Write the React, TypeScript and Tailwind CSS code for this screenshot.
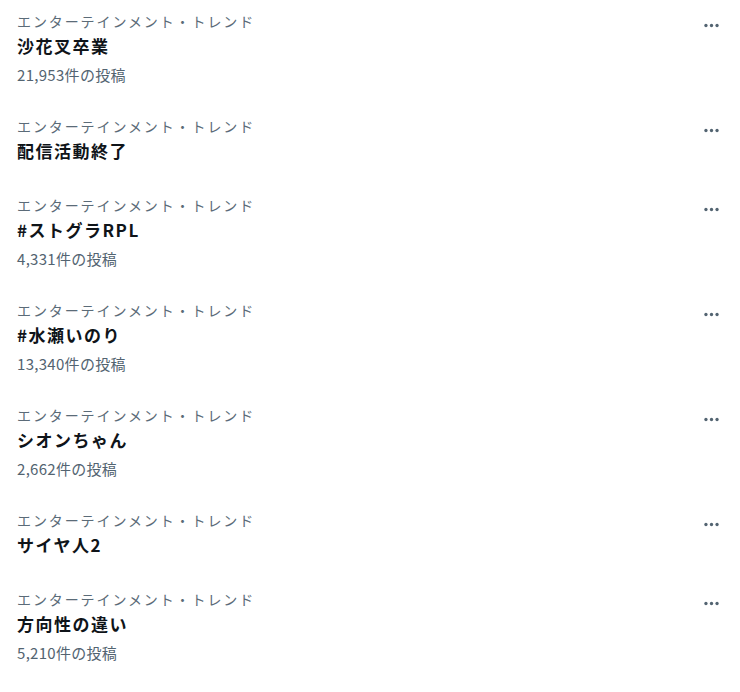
import React from "react";

type Trend = { title: string; count?: string };

const trends: Trend[] = [
  { title: "沙花叉卒業", count: "21,953件の投稿" },
  { title: "配信活動終了" },
  { title: "#ストグラRPL", count: "4,331件の投稿" },
  { title: "#水瀬いのり", count: "13,340件の投稿" },
  { title: "シオンちゃん", count: "2,662件の投稿" },
  { title: "サイヤ人2" },
  { title: "方向性の違い", count: "5,210件の投稿" },
];

const font = { fontFamily: '"Noto Sans CJK JP", "Noto Sans", sans-serif' };

function MoreIcon() {
  return (
    <svg viewBox="0 0 24 24" className="w-[19px] h-[19px] fill-[#536471]">
      <circle cx="5" cy="12" r="2.1" />
      <circle cx="12" cy="12" r="2.1" />
      <circle cx="19" cy="12" r="2.1" />
    </svg>
  );
}

function Row({ t }: { t: Trend }) {
  return (
    <div className={`flex justify-between pl-[17px] pr-[19px] pt-[11px] ${t.count ? "pb-[20px]" : "pb-[21px]"}`}>
      <div className="flex flex-col">
        <div className="text-[14px] leading-[20px] h-[20px] tracking-[1.9px] text-[#5b6b78]">
          エンターテインメント・トレンド
        </div>
        <div className="mt-[3px] text-[17px] leading-[24px] font-bold tracking-[1.5px] text-[#0f1419]">
          {t.title}
        </div>
        {t.count && (
          <div className="mt-[7px] text-[15px] leading-[20px] tracking-[0.3px] text-[#536471]">
            {t.count}
          </div>
        )}
      </div>
      <div className="pt-[5px]">
        <MoreIcon />
      </div>
    </div>
  );
}

export default function App() {
  return (
    <div className="w-[740px] h-[692px] bg-white overflow-hidden" style={font}>
      {trends.map((t, i) => (
        <Row key={i} t={t} />
      ))}
    </div>
  );
}
